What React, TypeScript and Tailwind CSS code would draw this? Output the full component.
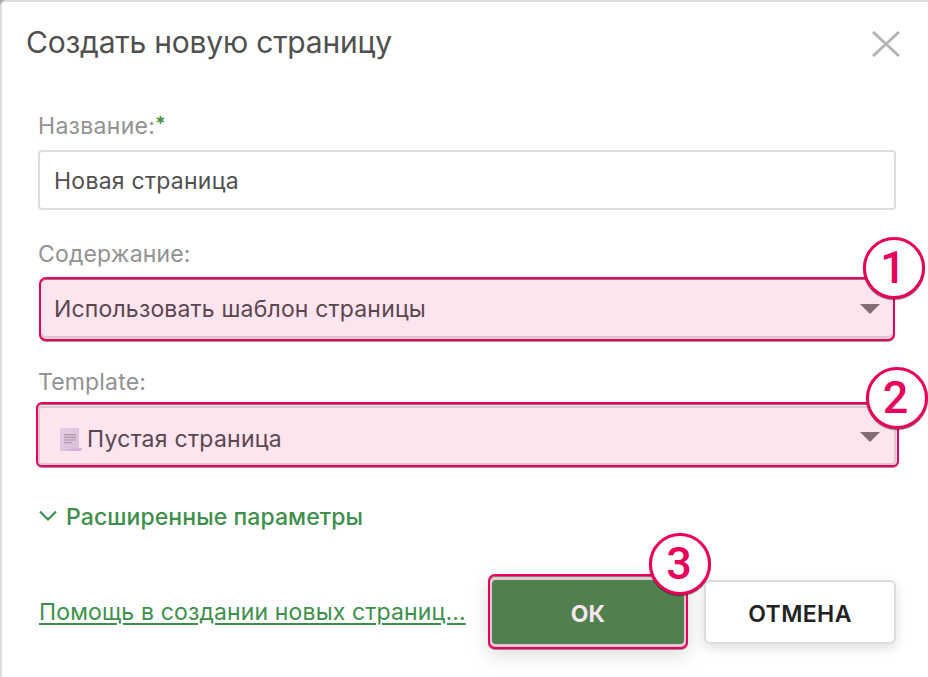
import React from 'react';

const Caret = ({ className = '' }) => (
  <svg className={`h-[10px] w-5 ${className}`} viewBox="0 0 20 10" fill="#836d77">
    <path d="M0 0H20L10 10Z" />
  </svg>
);

const PageIcon = () => (
  <svg className="h-[23px] w-[22px]" viewBox="0 0 22 23">
    <defs>
      <linearGradient id="sheet" x1="0" y1="0" x2="1" y2="1">
        <stop offset="0" stopColor="#e5cde2" />
        <stop offset="1" stopColor="#d9bfd8" />
      </linearGradient>
      <linearGradient id="roll" x1="0" y1="0" x2="1" y2="1">
        <stop offset="0" stopColor="#e1c4e4" />
        <stop offset="1" stopColor="#c9a3cd" />
      </linearGradient>
    </defs>
    <path d="M1 0H19V20H8L6 23H2Q0 23 0 21V1Q0 0 1 0Z" fill="url(#sheet)" />
    <path d="M6 20.5Q8 22 9 20H22Q22 23 19 23H5Q7 22.5 6 20.5Z" fill="url(#roll)" />
    <path d="M4 6.7H16M4 9.3H16M4 12H16M4 14.7H12" stroke="#a689a4" strokeWidth="1.1" />
  </svg>
);

const Badge = ({ className = '', children }) => (
  <span
    className={`absolute flex h-[62px] w-[62px] items-center justify-center rounded-full border-[3px] border-[#e8005a] bg-white font-['Roboto',sans-serif] text-[45px] leading-none font-medium tracking-normal text-[#e8005a] shadow-[0_1px_1px_rgba(60,20,40,0.65)] ${className}`}
  >
    {children}
  </span>
);

const Label = ({ children }) => (
  <div className="flex h-8 items-center text-[23px] text-[#929292]">{children}</div>
);

const App = () => {
  return (
    <div className="h-[677px] w-[928px] overflow-hidden bg-[#a8a8a8] font-['Inter',sans-serif] whitespace-nowrap text-[#505050]">
      <div className="h-full rounded-tl-[6px] border-t-2 border-l-2 border-[#dedede] bg-white">
        <header className="flex h-[108px] items-start justify-between pt-[20px] pr-[28px] pl-[24px]">
          <h1 className="text-[30px] leading-[40px] tracking-[-0.22px]">
            <span>Создать новую страницу</span>
          </h1>
          <button aria-label="Закрыть" className="mt-[9px]">
            <svg className="h-[26px] w-7" viewBox="0 0 28 26" fill="none" stroke="#b5b5b5" strokeWidth="3">
              <path d="M1 1L27 25M27 1L1 25" />
            </svg>
          </button>
        </header>

        <main className="pr-8 pl-9 tracking-[0.17px]">
          <Label>
            <span className="tracking-[0.3px]">Название:</span>
            <span className="mt-[-3px] text-[19px] font-semibold text-[#3d8a2c]">*</span>
          </Label>
          <div className="mt-[8px] flex h-[60px] items-center rounded-[4px] border-2 border-[#dddddd] pt-[2px] pl-[14px] text-[23px] tracking-[0.25px]">
            <span>Новая страница</span>
          </div>

          <div className="mt-[28px]">
            <Label>
              <span>Содержание:</span>
            </Label>
          </div>
          <div className="relative mt-[7px] mr-px ml-px flex h-[64px] items-center justify-between rounded-[7px] border-2 border-[#e8005a] bg-[#fde5ef] pr-[13px] pl-[13px] text-[23px] text-[#5c464f] shadow-[0_1px_0_rgba(80,40,60,0.5),inset_0_1px_0_#97707f,inset_0_-1px_0_#f1d9e3,inset_0_-3px_0_#dfc7d1]">
            <span>Использовать шаблон страницы</span>
            <Caret />
            <Badge className="-top-[42px] -right-[32px]">
              <span className="mt-[-2px] mr-[2px]">1</span>
            </Badge>
          </div>

          <div className="mt-[25px]">
            <Label>
              <span>Template:</span>
            </Label>
          </div>
          <div className="relative mt-[4px] -mr-[3px] -ml-[2px] h-[65px] rounded-[6px] border-2 border-[#e8005a] bg-[#fde5ef] pt-[2px] text-[23px] text-[#5c464f] shadow-[0_1px_0_rgba(80,40,60,0.5),inset_0_1px_0_#97707f]">
            <div className="mr-px flex h-[59px] items-center rounded-[4px] border-2 border-[#dfc7d1] pt-[7px] pr-[14px] pl-[20px]">
              <PageIcon />
              <span className="ml-[5px] tracking-[0.27px]">Пустая страница</span>
              <Caret className="mt-[-4px] ml-auto" />
            </div>
            <Badge className="-top-[37px] -right-[31px]">
              <span className="mt-[-2px] mr-[3px]">2</span>
            </Badge>
          </div>

          <div className="mt-[34px] flex h-8 items-center text-[23px] font-medium tracking-[0.08px] text-[#3d8f4b]">
            <svg className="mt-[-4px] h-[11px] w-[20px]" viewBox="0 0 20 11" fill="none" stroke="#3d8f4b" strokeWidth="2.2">
              <path d="M2 1.5L10 9.5L18 1.5" />
            </svg>
            <span className="ml-[8px]">Расширенные параметры</span>
          </div>

          <footer className="mt-[41px] flex">
            <a className="mt-[22px] ml-px h-8 w-[427px] text-[23px] leading-8 tracking-[0.14px] text-[#3d8f4b] underline decoration-2 underline-offset-[3px]">
              <span>Помощь в создании новых страниц...</span>
            </a>
            <div className="relative ml-[22px] h-[75px] w-[200px] rounded-[7px] border-2 border-[#e8005a] bg-[#e3c9d4] px-[2px] pt-[4px] shadow-[0_1px_0_rgba(80,40,60,0.5),0_6px_20px_rgba(0,0,0,0.14),inset_0_1px_0_#97707f]">
              <button className="flex h-[64px] w-full items-center justify-center rounded-[4px] bg-[#4f804d] pt-[5px] text-[23px] font-bold text-[#fde5ef]">
                <span>ОК</span>
              </button>
              <Badge className="-top-[43px] -right-[25px] z-10">
                <span className="mt-[-2px] mr-[2px]">3</span>
              </Badge>
            </div>
            <button className="mt-[6px] ml-[16px] h-[64px] w-[192px] rounded-[6px] border-2 border-[#dddddd] bg-white pt-[5px] text-[23px] font-semibold tracking-[0.4px] text-[#222222] shadow-[0_4px_12px_rgba(0,0,0,0.13)]">
              <span>ОТМЕНА</span>
            </button>
          </footer>
        </main>
      </div>
    </div>
  );
};

export default App;
